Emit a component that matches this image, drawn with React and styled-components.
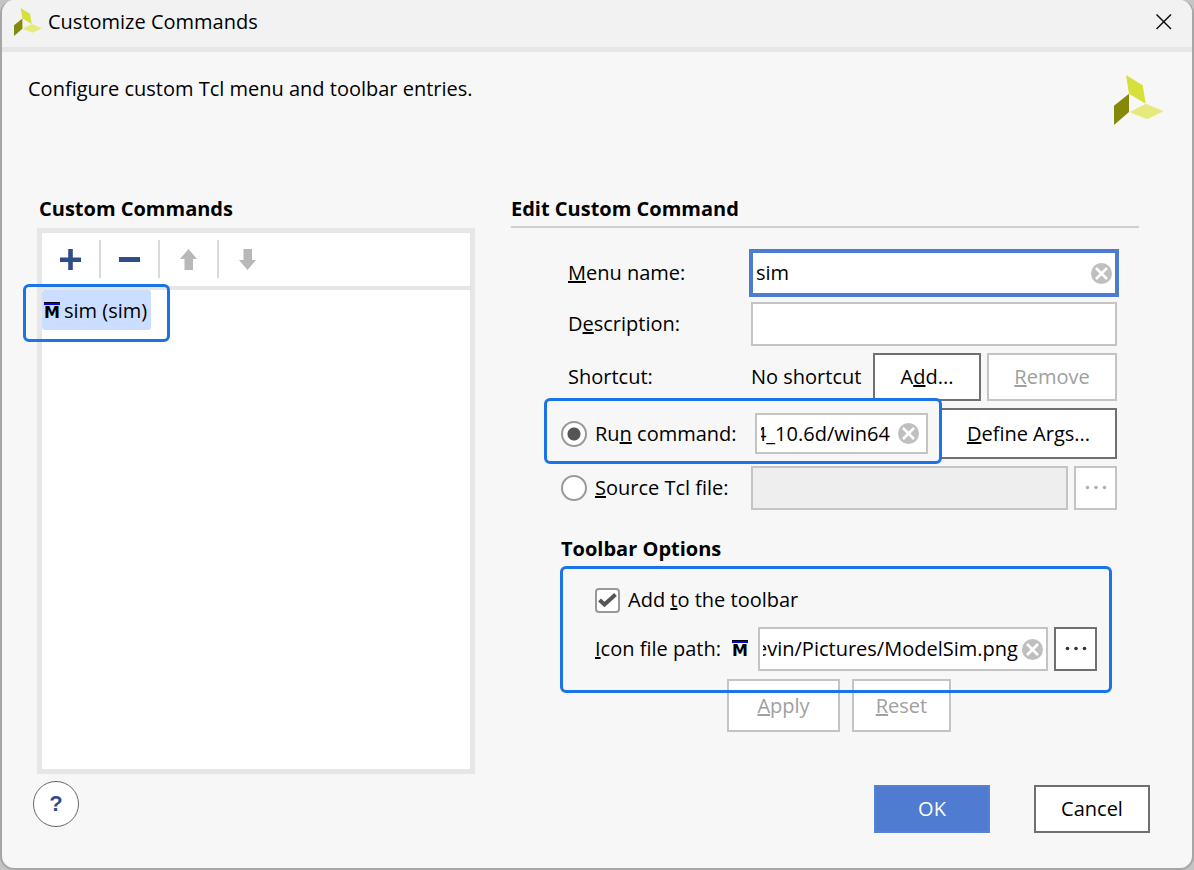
import { useEffect, useRef, useState } from "react";
import styled, { createGlobalStyle, css } from "styled-components";

const GlobalStyle = createGlobalStyle`
  * {
    box-sizing: border-box;
  }

  body {
    margin: 0;
    background-color: #c4c4c4;
  }

  body,
  button,
  input {
    font-family: "Open Sans", "Noto Sans", sans-serif;
    font-size: 20px;
    line-height: 28px;
    color: #000;
  }
`;

const Window = styled.div`
  display: flex;
  flex-direction: column;
  min-height: 100vh;
  border: solid #a6a6a6;
  border-width: 0 2px 2px;
  border-radius: 14px;
  background-color: #f7f7f7;
  overflow: hidden;
`;

const TitleBar = styled.header`
  display: flex;
  align-items: center;
  gap: 6px;
  height: 52px;
  padding: 0 20px 3px 12px;
  border-bottom: solid 5px #e6e6e6;
  background-color: #f2f2f2;
`;

const WindowTitle = styled.h1`
  flex: 1;
  margin: 0;
  font-size: 20px;
  font-weight: 400;
`;

const PlainButton = styled.button`
  display: flex;
  align-items: center;
  justify-content: center;
  padding: 0;
  border: none;
  background: none;
`;

const Intro = styled.div`
  display: flex;
  align-items: flex-start;
  justify-content: space-between;
  padding: 23px 28px 0 26px;
`;

const IntroText = styled.p`
  margin: 0;
`;

const Content = styled.main`
  display: flex;
  flex: 1;
  gap: 36px;
  padding: 70px 53px 0 35px;
`;

const CommandsPanel = styled.section`
  display: flex;
  flex: 438 1 0;
  flex-direction: column;
  gap: 5px;
`;

const EditPanel = styled.section`
  flex: 628 1 0;
`;

const Heading = styled.h2`
  margin: 0;
  font-size: 20px;
  font-weight: 700;
  padding-left: ${(props) => props.$indent || 0}px;
`;

const RuledHeading = styled(Heading)`
  padding-bottom: 3px;
  border-bottom: solid 2px #cfcfcf;
`;

const SubHeading = styled(Heading)`
  margin-top: 18px;
`;

const CommandsBox = styled.div`
  flex: 1;
  border: solid 5px #e6e6e6;
  background-color: #fff;
`;

const Toolbar = styled.div`
  display: flex;
  height: 57px;
  padding: 7px 0 8px;
  border-bottom: solid 4px #e6e6e6;
`;

const ToolButton = styled(PlainButton)`
  box-sizing: content-box;
  width: 57px;
  border-right: ${(props) => (props.$last ? "none" : "solid 2px #d9d9d9")};
`;

const CommandList = styled.ul`
  display: flex;
  flex-direction: column;
  align-items: flex-start;
  margin: 0;
  padding: 0;
  list-style: none;
`;

const marked = css`
  position: relative;

  &::after {
    content: "";
    position: absolute;
    z-index: 1;
    border: solid 3px #1a73e8;
    border-radius: 6px;
    pointer-events: none;
  }
`;

const CommandItem = styled.li`
  ${marked}
  display: flex;
  align-items: center;
  gap: 4px;
  height: 40px;
  padding: 2px 4px 0 2px;
  border-radius: 3px;
  background-color: #ccdeff;

  &::after {
    inset: -6px -19px -12px -19px;
  }
`;

const Form = styled.form`
  display: flex;
  flex-direction: column;
  gap: 7px;
  padding: 23px 22px 0 50px;
`;

const Row = styled.div`
  display: flex;
  align-items: center;
  gap: ${(props) => props.$gap || 6}px;
  min-height: ${(props) => props.$height || 44}px;
`;

const FieldLabel = styled.label`
  flex: none;
  width: 177px;
  margin-left: 7px;
`;

const RadioLabel = styled.label`
  display: flex;
  flex: none;
  align-items: center;
  gap: 8px;
  width: 184px;
`;

const Radio = styled.input`
  appearance: none;
  width: 26px;
  height: 26px;
  margin: 0;
  border: solid 2px #999;
  border-radius: 50%;
  background-color: #fff;

  &:checked {
    background-image: radial-gradient(circle, #555 6px, transparent 7px);
  }
`;

const FieldBox = styled.div`
  display: flex;
  flex: 1;
  align-items: center;
  gap: 4px;
  min-width: 0;
  height: 44px;
  padding: 0 3px;
  border: solid 2px #c4c4c4;
  background-color: ${(props) => (props.$disabled ? "#eee" : "#fff")};

  ${(props) =>
    props.$active &&
    css`
      border-color: #4d7bcf;
      box-shadow: 0 0 0 2px #4d7bcf;
    `}

  ${(props) =>
    props.$compact &&
    css`
      gap: 8px;
      height: 41px;
      padding: 0 7px 0 4px;
    `}
`;

const TextInput = styled.input`
  flex: 1;
  width: 100%;
  min-width: 0;
  padding: 0;
  border: none;
  outline: none;
  background: none;
`;

const ShortcutValue = styled.span`
  flex: 1;
  white-space: nowrap;
`;

const Button = styled.button`
  flex: none;
  width: ${(props) => props.$width}px;
  height: ${(props) => props.$height || 48}px;
  padding: 0;
  border: solid 2px #707070;
  background-color: #fff;

  &:disabled {
    border-color: #c4c4c4;
    color: #a0a0a0;
  }
`;

const PrimaryButton = styled(Button)`
  border-color: #5581d6;
  background-color: #4f7bd0;
  color: #fff;
`;

const BrowseButton = styled(Button)`
  display: flex;
  align-items: center;
  justify-content: center;
`;

const RunGroup = styled.div`
  ${marked}
  display: flex;
  align-items: center;
  gap: 10px;
  width: 367px;

  &::after {
    inset: -15px -14px -10px -17px;
  }
`;

const DefineButton = styled(Button)`
  flex: 1;
`;

const ToolbarGroup = styled.div`
  ${marked}
  display: flex;
  flex-direction: column;
  gap: 14px;
  margin: 17px 20px 1px 34px;

  &::after {
    inset: -21px -15px -22px -35px;
  }
`;

const CheckLabel = styled.label`
  display: flex;
  align-items: center;
  gap: 8px;
  height: 26px;
`;

const CheckWrap = styled.span`
  display: grid;

  > * {
    grid-area: 1 / 1;
  }

  svg {
    pointer-events: none;
  }

  input:not(:checked) + svg {
    visibility: hidden;
  }
`;

const Checkbox = styled.input`
  appearance: none;
  width: 25px;
  height: 25px;
  margin: 0;
  border: solid 2px #999;
  border-radius: 4px;
  background-color: #fff;
`;

const IconPathLabel = styled.label`
  display: flex;
  flex: none;
  align-items: center;
  gap: 11px;
  margin-right: 4px;
`;

const Actions = styled.div`
  display: flex;
  gap: 12px;
  padding-left: 166px;
`;

const Footer = styled.footer`
  display: flex;
  align-items: flex-end;
  gap: 44px;
  padding: 7px 42px 35px 31px;
`;

const HelpButton = styled(PlainButton)`
  align-self: flex-start;
  width: 46px;
  height: 46px;
  margin: 0 auto 6px 0;
  border: solid 1px #666;
  border-radius: 50%;
  background-color: #fff;
  color: #2f4d87;
  font-family: "Liberation Sans", sans-serif;
  font-size: 22px;
  font-weight: 700;
`;

const MarkBox = styled.span`
  flex: none;
  width: 16px;
  height: 18px;
  border-top: solid 1px #000;
  box-shadow: inset 0 2px #00f;
  font-family: "DejaVu Sans", sans-serif;
  font-size: 16px;
  font-weight: 700;
  line-height: 20px;
  text-align: center;
`;

function Logo({ size }) {
  return (
    <svg width={size} height={size} viewBox="0 0 50 50" aria-hidden="true">
      <path d="M12 0 28.700 10.300 31.700 28.700 15 18.700Z" fill="#d6e03a" />
      <path d="M0 30.700 15 18.700V37L0 50Z" fill="#848a08" />
      <path d="M15.500 37 32 28.700 49.700 36.300 33 44.300Z" fill="#e4ea7c" />
    </svg>
  );
}

function ModelSimMark() {
  return <MarkBox aria-hidden="true">M</MarkBox>;
}

function Dots({ color }) {
  return (
    <svg width="24" height="6" viewBox="0 0 24 6" fill={color}>
      <circle cx="3.500" cy="2.500" r="1.800" />
      <circle cx="12" cy="2.500" r="1.800" />
      <circle cx="20.500" cy="2.500" r="1.800" />
    </svg>
  );
}

function ClearButton({ onClick }) {
  return (
    <PlainButton type="button" aria-label="Clear" onClick={onClick}>
      <svg width="21" height="21" viewBox="0 0 21 21">
        <circle cx="10.500" cy="10.500" r="10.500" fill="#bfbfbf" />
        <path d="M5 5 16 16M16 5 5 16" stroke="#fff" strokeWidth="2.600" />
      </svg>
    </PlainButton>
  );
}

function ClearableField({ id, label, initialValue, ...boxProps }) {
  const [value, setValue] = useState(initialValue);
  const inputRef = useRef(null);

  // long paths show their last part
  useEffect(() => {
    inputRef.current.scrollLeft = inputRef.current.scrollWidth;
  }, []);

  return (
    <FieldBox {...boxProps}>
      <TextInput
        id={id}
        aria-label={label}
        ref={inputRef}
        value={value}
        spellCheck={false}
        onChange={(event) => setValue(event.target.value)}
      />
      <ClearButton onClick={() => setValue("")} />
    </FieldBox>
  );
}

export default function App() {
  const [source, setSource] = useState("command");

  return (
    <>
      <GlobalStyle />
      <Window>
        <TitleBar>
          <Logo size={28} />
          <WindowTitle>Customize Commands</WindowTitle>
          <PlainButton type="button" aria-label="Close">
            <svg width="16" height="16" viewBox="0 0 16 16" stroke="#111">
              <path d="M.5 .5 15 15M15 .5 .5 15" strokeWidth="1.500" />
            </svg>
          </PlainButton>
        </TitleBar>

        <Intro>
          <IntroText>Configure custom Tcl menu and toolbar entries.</IntroText>
          <Logo size={50} />
        </Intro>

        <Content>
          <CommandsPanel>
            <Heading $indent={2}>Custom Commands</Heading>
            <CommandsBox>
              <Toolbar>
                <ToolButton type="button" aria-label="Add command">
                  <svg width="21" height="21" viewBox="0 0 21 21" fill="#2f4d87">
                    <path d="M8.200 0h4.600v8.500H21v4.400h-8.200V21H8.200v-8.100H0V8.500h8.200z" />
                  </svg>
                </ToolButton>
                <ToolButton type="button" aria-label="Remove command">
                  <svg width="21" height="21" viewBox="0 0 21 21" fill="#2f4d87">
                    <path d="M0 8h21v5H0z" />
                  </svg>
                </ToolButton>
                <ToolButton type="button" aria-label="Move up" disabled>
                  <svg width="17" height="21" viewBox="0 0 17 21" fill="#b8b8b8">
                    <path d="M8.500 0 17 10H13V21H4.500V10H0z" />
                  </svg>
                </ToolButton>
                <ToolButton type="button" aria-label="Move down" disabled $last>
                  <svg width="17" height="21" viewBox="0 0 17 21" fill="#b8b8b8">
                    <path d="M8.500 21 17 11H13V0H4.500v11H0z" />
                  </svg>
                </ToolButton>
              </Toolbar>
              <CommandList>
                <CommandItem>
                  <ModelSimMark />
                  sim (sim)
                </CommandItem>
              </CommandList>
            </CommandsBox>
          </CommandsPanel>

          <EditPanel>
            <RuledHeading>Edit Custom Command</RuledHeading>
            <Form onSubmit={(event) => event.preventDefault()}>
              <Row>
                <FieldLabel htmlFor="menu-name">
                  <u>M</u>enu name:
                </FieldLabel>
                <ClearableField id="menu-name" initialValue="sim" $active />
              </Row>
              <Row>
                <FieldLabel htmlFor="description">
                  D<u>e</u>scription:
                </FieldLabel>
                <FieldBox>
                  <TextInput id="description" />
                </FieldBox>
              </Row>
              <Row $height={48}>
                <FieldLabel as="span">Shortcut:</FieldLabel>
                <ShortcutValue>No shortcut</ShortcutValue>
                <Button type="button" $width={108}>
                  A<u>d</u>d...
                </Button>
                <Button type="button" $width={130} disabled>
                  <u>R</u>emove
                </Button>
              </Row>
              <Row $height={51} $gap={12}>
                <RunGroup>
                  <RadioLabel>
                    <Radio
                      type="radio"
                      name="source"
                      checked={source === "command"}
                      onChange={() => setSource("command")}
                    />
                    <span>
                      Ru<u>n</u> command:
                    </span>
                  </RadioLabel>
                  <ClearableField
                    label="Run command"
                    initialValue="C:/modeltech64_10.6d/win64"
                    $compact
                  />
                </RunGroup>
                <DefineButton type="button" $height={51}>
                  <u>D</u>efine Args...
                </DefineButton>
              </Row>
              <Row>
                <RadioLabel>
                  <Radio
                    type="radio"
                    name="source"
                    checked={source === "file"}
                    onChange={() => setSource("file")}
                  />
                  <span>
                    <u>S</u>ource Tcl file:
                  </span>
                </RadioLabel>
                <FieldBox $disabled>
                  <TextInput aria-label="Source Tcl file" disabled />
                </FieldBox>
                <BrowseButton
                  type="button"
                  aria-label="Browse Tcl file"
                  $width={43}
                  $height={44}
                  disabled
                >
                  <Dots color="#b0b0b0" />
                </BrowseButton>
              </Row>

              <SubHeading as="h3">Toolbar Options</SubHeading>
              <ToolbarGroup>
                <CheckLabel>
                  <CheckWrap>
                    <Checkbox type="checkbox" defaultChecked />
                    <svg width="25" height="25" viewBox="0 0 25 25" fill="none">
                      <path
                        d="M4.500 12 9.500 16.500 20.500 6.500"
                        stroke="#555"
                        strokeWidth="4"
                      />
                    </svg>
                  </CheckWrap>
                  <span>
                    Add <u>t</u>o the toolbar
                  </span>
                </CheckLabel>
                <Row>
                  <IconPathLabel htmlFor="icon-path">
                    <span>
                      <u>I</u>con file path:
                    </span>
                    <ModelSimMark />
                  </IconPathLabel>
                  <ClearableField
                    id="icon-path"
                    initialValue="C:/Users/kevin/Pictures/ModelSim.png"
                  />
                  <BrowseButton
                    type="button"
                    aria-label="Browse icon file"
                    $width={43}
                    $height={44}
                  >
                    <Dots color="#333" />
                  </BrowseButton>
                </Row>
              </ToolbarGroup>
              <Actions>
                <Button type="button" $width={113} $height={53} disabled>
                  <u>A</u>pply
                </Button>
                <Button type="button" $width={99} $height={53} disabled>
                  <u>R</u>eset
                </Button>
              </Actions>
            </Form>
          </EditPanel>
        </Content>

        <Footer>
          <HelpButton type="button">?</HelpButton>
          <PrimaryButton type="button" $width={116}>
            OK
          </PrimaryButton>
          <Button type="button" $width={116}>
            Cancel
          </Button>
        </Footer>
      </Window>
    </>
  );
}
